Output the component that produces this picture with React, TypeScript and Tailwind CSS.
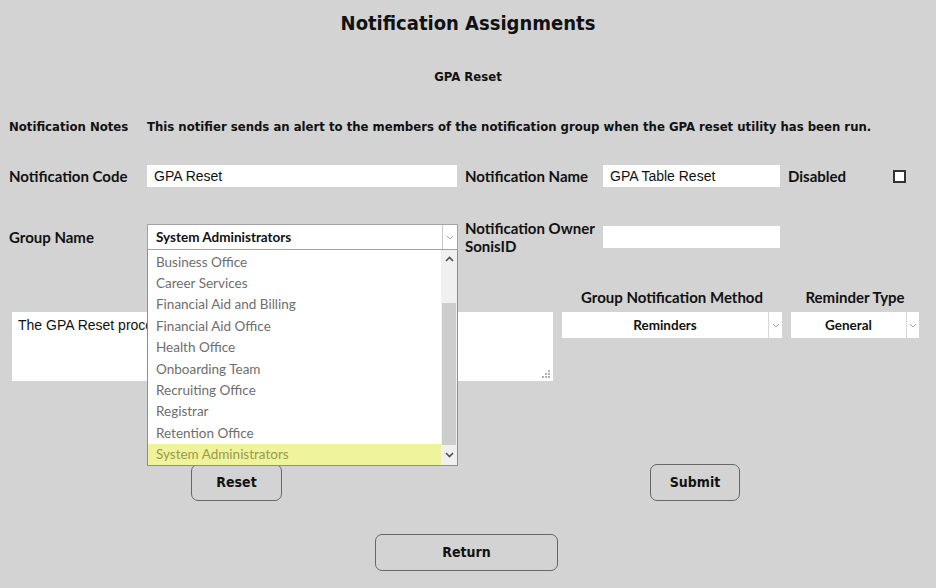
import React from "react";

const narrow = "font-['Liberation_Sans_Narrow','DejaVu_Sans_Condensed',sans-serif]";
const lato = "font-['Lato','Noto_Sans',sans-serif]";
const arial = "font-['Liberation_Sans',Arial,sans-serif]";

function Chevron({ className = "" }: { className?: string }) {
  return (
    <svg width="8" height="5" viewBox="0 0 8 5" className={className}>
      <path d="M1 1 L4 4 L7 1" fill="none" stroke="#a8a8a8" strokeWidth="1" />
    </svg>
  );
}

const groups = [
  "Business Office",
  "Career Services",
  "Financial Aid and Billing",
  "Financial Aid Office",
  "Health Office",
  "Onboarding Team",
  "Recruiting Office",
  "Registrar",
  "Retention Office",
  "System Administrators",
];

export default function App() {
  return (
    <div className={`w-[936px] h-[588px] bg-[#d3d3d3] text-[#111] relative overflow-hidden ${lato}`}>
      {/* Title */}
      <div className={`h-[42px] pt-[3px] flex items-center justify-center text-[20px] ${narrow} font-bold`}>
        Notification Assignments
      </div>
      {/* Subtitle */}
      <div className={`h-[70px] flex items-center justify-center text-[13px] font-bold ${narrow}`}>
        GPA Reset
      </div>
      {/* Notes */}
      <div className={`h-[30px] flex items-center pl-[9px] text-[13px] font-bold ${narrow}`}>
        <div className="w-[138px]">Notification Notes</div>
        <div>This notifier sends an alert to the members of the notification group when the GPA reset utility has been run.</div>
      </div>
      {/* Code row */}
      <div className="h-[68px] flex items-center pl-[9px] text-[15px] font-bold">
        <div className="w-[138px]">Notification Code</div>
        <div className={`w-[310px] h-[22px] bg-white flex items-center pl-[7px] font-normal text-[14px] ${arial}`}>GPA Reset</div>
        <div className="w-[138px] ml-[8px]">Notification Name</div>
        <div className={`w-[177px] h-[22px] bg-white flex items-center pl-[7px] font-normal text-[14px] ${arial}`}>GPA Table Reset</div>
        <div className="w-[105px] ml-[8px]">Disabled</div>
        <div className="w-[13px] h-[13px] border-2 border-[#333] bg-white" />
      </div>
      {/* Group row */}
      <div className="h-[54px] flex items-center pl-[9px] text-[15px] font-bold">
        <div className="w-[138px]">Group Name</div>
        <div className="w-[311px] h-[26px] bg-white border border-[#a3a3a3] flex items-center">
          <div className="flex-1 pl-[8px] text-[13.5px]">System Administrators</div>
          <div className="w-[15px] h-full border-l border-[#c8c8c8] flex items-center justify-center">
            <Chevron />
          </div>
        </div>
        <div className="w-[138px] ml-[7px] leading-[18px]">
          Notification Owner
          <br />
          SonisID
        </div>
        <div className="w-[177px] h-[22px] bg-white" />
      </div>
      {/* Textarea / selects row */}
      <div className="flex mt-[23px] pl-[12px]">
        <div className="mt-[25px] w-[541px] h-[69px] bg-white relative pl-[6px] pt-[3px]">
          <div className={`text-[14px] ${arial}`}>The GPA Reset process was run for the selected terms.</div>
          <svg width="8" height="8" viewBox="0 0 8 8" className="absolute right-[3px] bottom-[3px]">
            <g fill="#b0b0b0">
              <rect x="6" y="0" width="2" height="2" />
              <rect x="3" y="3" width="2" height="2" />
              <rect x="6" y="3" width="2" height="2" />
              <rect x="0" y="6" width="2" height="2" />
              <rect x="3" y="6" width="2" height="2" />
              <rect x="6" y="6" width="2" height="2" />
            </g>
          </svg>
        </div>
        <div className="ml-[9px] w-[220px] flex flex-col text-[15px] font-bold">
          <div className="h-[20px] flex items-center justify-center">Group Notification Method</div>
          <div className="mt-[5px] h-[26px] bg-white flex items-center">
            <div className="flex-1 text-center text-[13.5px]">Reminders</div>
            <div className="w-[14px] h-full border-l border-[#d8d8d8] flex items-center justify-center">
              <Chevron />
            </div>
          </div>
        </div>
        <div className="ml-[9px] w-[128px] flex flex-col text-[15px] font-bold">
          <div className="h-[20px] flex items-center justify-center">Reminder Type</div>
          <div className="mt-[5px] h-[26px] bg-white flex items-center">
            <div className="flex-1 text-center text-[13.5px]">General</div>
            <div className="w-[13px] h-full border-l border-[#d8d8d8] flex items-center justify-center">
              <Chevron />
            </div>
          </div>
        </div>
      </div>
      {/* Reset / Submit */}
      <div className={`flex mt-[83px] text-[14px] font-bold ${narrow}`}>
        <button className="ml-[191px] w-[91px] h-[37px] border border-[#666] rounded-[7px] flex items-center justify-center">
          Reset
        </button>
        <button className="ml-[368px] w-[90px] h-[37px] border border-[#666] rounded-[7px] flex items-center justify-center">
          Submit
        </button>
      </div>
      {/* Return */}
      <div className={`flex mt-[33px] text-[14px] font-bold ${narrow}`}>
        <button className="ml-[375px] w-[183px] h-[37px] border border-[#666] rounded-[7px] flex items-center justify-center">
          Return
        </button>
      </div>

      {/* Dropdown list overlay */}
      <div className="absolute left-[147px] top-[250px] w-[311px] h-[216px] bg-white border border-[#8f8f8f] border-t-0 flex">
        <div className="flex-1 flex flex-col pt-[1px]">
          {groups.map((g, i) => (
            <div
              key={g}
              className={`h-[21.5px] flex items-center pl-[8px] text-[13.5px] ${
                i === groups.length - 1 ? "bg-[#eff39b] text-[#9a9a4c]" : "text-[#6e6e6e]"
              }`}
            >
              {g}
            </div>
          ))}
        </div>
        <div className="w-[16px] bg-[#f0f0f0] flex flex-col">
          <div className="h-[17px] flex items-center justify-center">
            <svg width="9" height="6" viewBox="0 0 9 6">
              <path d="M1 5 L4.5 1.5 L8 5" fill="none" stroke="#505050" strokeWidth="1.6" />
            </svg>
          </div>
          <div className="h-[36px]" />
          <div className="mx-[1px] h-[142px] bg-[#cdcdcd]" />
          <div className="flex-1 flex items-center justify-center">
            <svg width="9" height="6" viewBox="0 0 9 6">
              <path d="M1 1 L4.5 4.5 L8 1" fill="none" stroke="#505050" strokeWidth="1.6" />
            </svg>
          </div>
        </div>
      </div>
    </div>
  );
}
